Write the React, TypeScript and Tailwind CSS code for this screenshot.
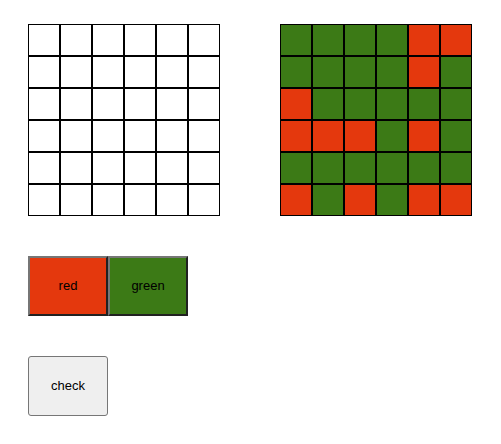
import React from 'react';

type Cell = 'r' | 'g' | null;

const target: Cell[][] = [
    ['g', 'g', 'g', 'g', 'r', 'r'],
    ['g', 'g', 'g', 'g', 'r', 'g'],
    ['r', 'g', 'g', 'g', 'g', 'g'],
    ['r', 'r', 'r', 'g', 'r', 'g'],
    ['g', 'g', 'g', 'g', 'g', 'g'],
    ['r', 'g', 'r', 'g', 'r', 'r'],
];

const blank: Cell[][] = Array.from({ length: 6 }, () => Array(6).fill(null));

const cellColor = (c: Cell) =>
    c === 'r' ? 'bg-[#e4380d]' : c === 'g' ? 'bg-[#3c7a16]' : 'bg-white';

const Board: React.FC<{ cells: Cell[][] }> = ({ cells }) => (
    <div className="flex flex-col">
        {cells.map((row, i) => (
            <div key={i} className="flex">
                {row.map((c, j) => (
                    <div key={j} className={`w-8 h-8 border border-black ${cellColor(c)}`} />
                ))}
            </div>
        ))}
    </div>
);

export default function App() {
    return (
        <div className="pl-[28px] pt-[24px] text-[13px] text-black font-['Liberation_Sans',Arial,sans-serif]">
            {/* boards */}
            <div className="flex gap-[60px]">
                <Board cells={blank} />
                <Board cells={target} />
            </div>

            {/* palette */}
            <div className="flex mt-[40px]">
                <button className="w-20 h-[60px] bg-[#e4380d] border-2 border-t-[#767676] border-l-[#767676] border-b-[#212121] border-r-[#212121]">
                    red
                </button>
                <button className="w-20 h-[60px] bg-[#3c7a16] border-2 border-t-[#767676] border-l-[#767676] border-b-[#212121] border-r-[#212121]">
                    green
                </button>
            </div>

            {/* check */}
            <div className="mt-[40px]">
                <button className="w-20 h-[60px] bg-[#efefef] border border-[#767676] rounded-[3px]">
                    check
                </button>
            </div>
        </div>
    );
}
